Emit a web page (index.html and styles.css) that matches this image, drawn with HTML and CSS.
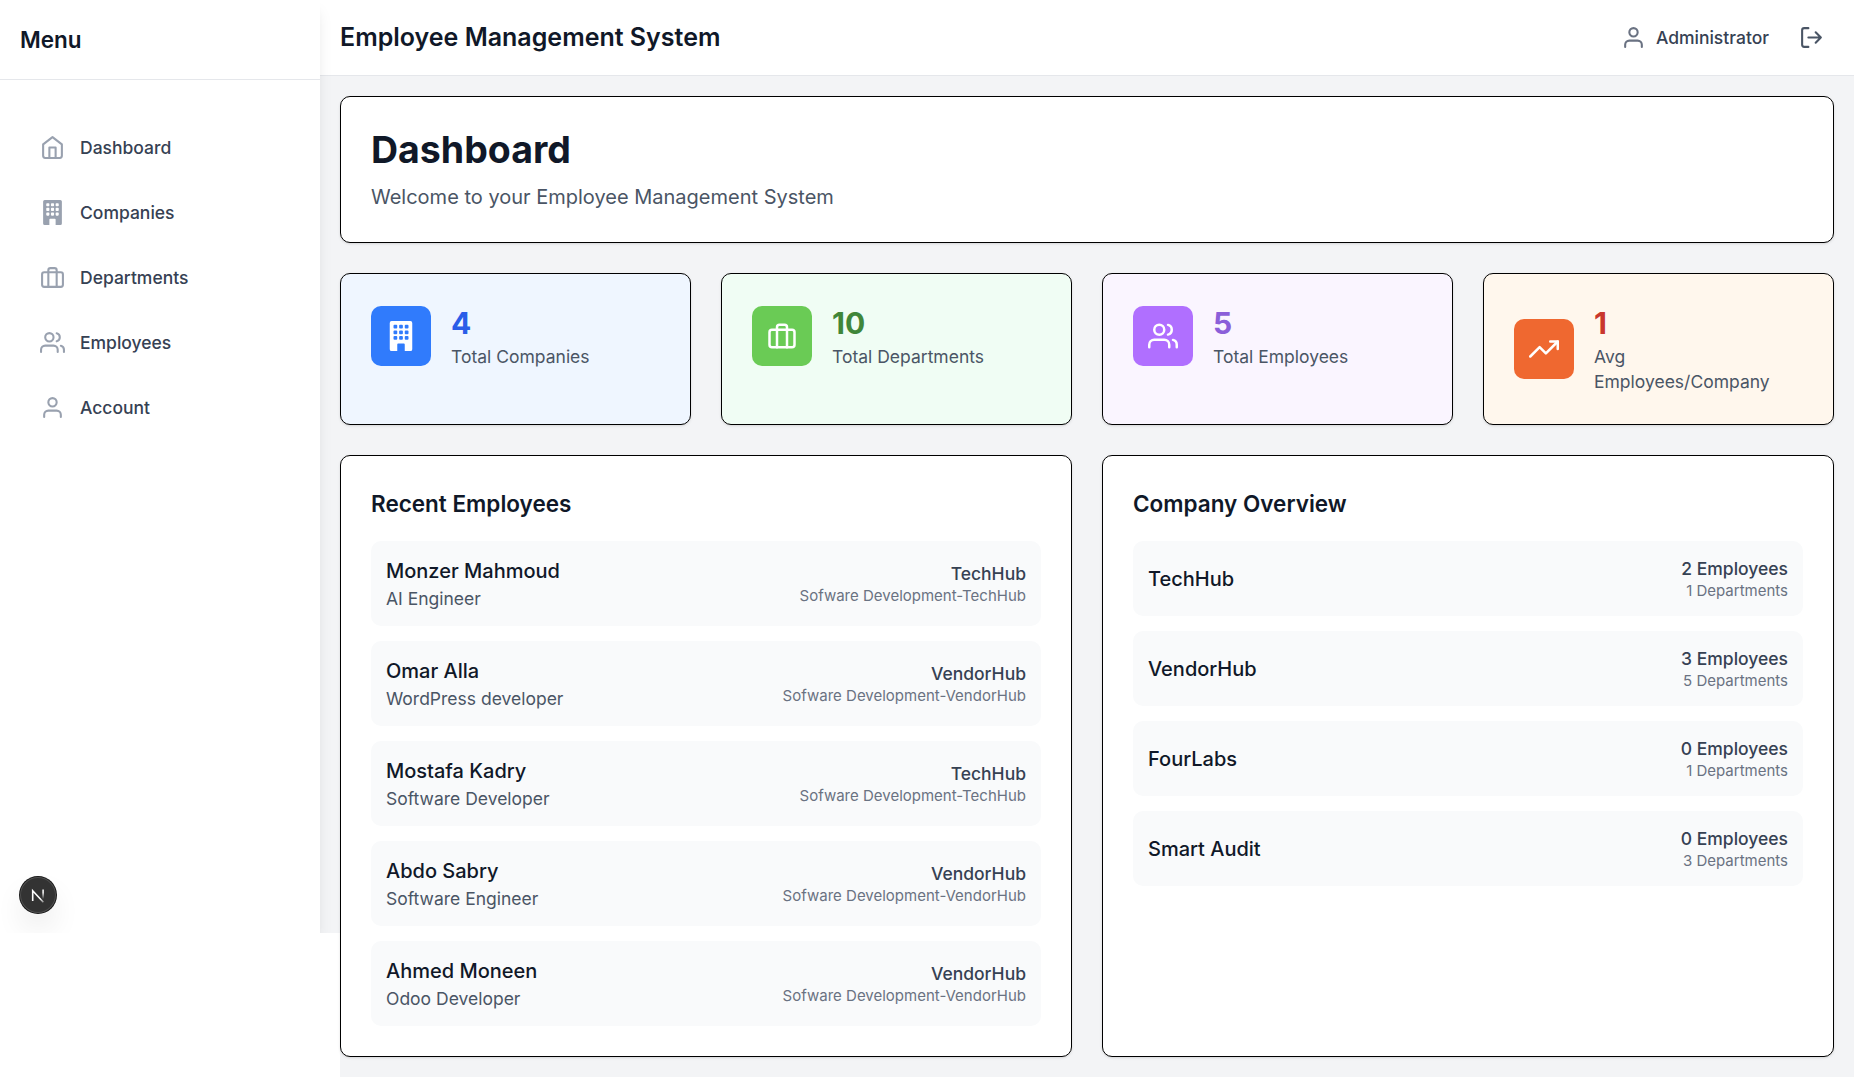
FILE: index.html
```html
<!DOCTYPE html>
<html lang="en">
<head>
<meta charset="utf-8">
<title>Employee Management System</title>
<link rel="stylesheet" href="styles.css">
</head>
<body>
<svg class="sprite" aria-hidden="true">
  <symbol id="home" viewBox="0 0 24 24"><path d="M3 9l9-7 9 7v11a2 2 0 0 1-2 2H5a2 2 0 0 1-2-2z"/><path d="M9 22V12h6v10"/></symbol>
  <symbol id="building" viewBox="0 0 16 16"><path fill="currentColor" stroke="none" fill-rule="evenodd" d="M3 0a1 1 0 0 0-1 1v14a1 1 0 0 0 1 1h3v-3.5a.5.5 0 0 1 .5-.5h3a.5.5 0 0 1 .5.5V16h3a1 1 0 0 0 1-1V1a1 1 0 0 0-1-1zm1 2.5a.5.5 0 0 1 .5-.5h1a.5.5 0 0 1 .5.5v1a.5.5 0 0 1-.5.5h-1a.5.5 0 0 1-.5-.5zm3 0a.5.5 0 0 1 .5-.5h1a.5.5 0 0 1 .5.5v1a.5.5 0 0 1-.5.5h-1a.5.5 0 0 1-.5-.5zm3.500-.5h1a.5.5 0 0 1 .5.5v1a.5.5 0 0 1-.5.5h-1a.5.5 0 0 1-.5-.5v-1a.5.5 0 0 1 .5-.5M4 5.500a.5.5 0 0 1 .5-.5h1a.5.5 0 0 1 .5.5v1a.5.5 0 0 1-.5.5h-1a.5.5 0 0 1-.5-.5zM7.500 5h1a.5.5 0 0 1 .5.5v1a.5.5 0 0 1-.5.5h-1a.5.5 0 0 1-.5-.5v-1a.5.5 0 0 1 .5-.5m2.500.5a.5.5 0 0 1 .5-.5h1a.5.5 0 0 1 .5.5v1a.5.5 0 0 1-.5.5h-1a.5.5 0 0 1-.5-.5zM4.500 8h1a.5.5 0 0 1 .5.5v1a.5.5 0 0 1-.5.5h-1a.5.5 0 0 1-.5-.5v-1a.5.5 0 0 1 .5-.5m2.500.5a.5.5 0 0 1 .5-.5h1a.5.5 0 0 1 .5.5v1a.5.5 0 0 1-.5.5h-1a.5.5 0 0 1-.5-.5zm3.500-.5h1a.5.5 0 0 1 .5.5v1a.5.5 0 0 1-.5.5h-1a.5.5 0 0 1-.5-.5v-1a.5.5 0 0 1 .5-.5"/></symbol>
  <symbol id="briefcase" viewBox="0 0 24 24"><rect x="2" y="7" width="20" height="14" rx="2"/><path d="M16 21V5a2 2 0 0 0-2-2h-4a2 2 0 0 0-2 2v16"/></symbol>
  <symbol id="users" viewBox="0 0 24 24"><path d="M17 21v-2a4 4 0 0 0-4-4H5a4 4 0 0 0-4 4v2"/><circle cx="9" cy="7" r="4"/><path d="M23 21v-2a4 4 0 0 0-3-3.87M16 3.130a4 4 0 0 1 0 7.750"/></symbol>
  <symbol id="user" viewBox="0 0 24 24"><path d="M20 21v-2a4 4 0 0 0-4-4H8a4 4 0 0 0-4 4v2"/><circle cx="12" cy="7" r="4"/></symbol>
  <symbol id="logout" viewBox="0 0 24 24"><path d="M9 21H5a2 2 0 0 1-2-2V5a2 2 0 0 1 2-2h4M16 17l5-5-5-5M21 12H9"/></symbol>
  <symbol id="trend" viewBox="0 0 24 24"><path d="M23 6l-9.500 9.500-5-5L1 18"/><path d="M17 6h6v6"/></symbol>
</svg>
<div class="app">
  <aside class="sidebar">
    <div class="sidebar-head"><h2>Menu</h2></div>
    <nav class="nav">
      <a class="nav-item"><svg class="icon"><use href="#home"/></svg>Dashboard</a>
      <a class="nav-item"><svg class="icon"><use href="#building"/></svg>Companies</a>
      <a class="nav-item"><svg class="icon"><use href="#briefcase"/></svg>Departments</a>
      <a class="nav-item"><svg class="icon"><use href="#users"/></svg>Employees</a>
      <a class="nav-item"><svg class="icon"><use href="#user"/></svg>Account</a>
    </nav>
  </aside>
  <div class="content">
    <header class="topbar">
      <h1>Employee Management System</h1>
      <div class="account">
        <div class="who"><svg class="icon"><use href="#user"/></svg><span>Administrator</span></div>
        <div class="logout"><svg class="icon"><use href="#logout"/></svg></div>
      </div>
    </header>
    <main class="main">
      <section class="card">
        <h2 class="page-title">Dashboard</h2>
        <p class="lead">Welcome to your Employee Management System</p>
      </section>
      <section class="stats">
        <div class="card blue"><div class="stat"><div class="badge"><svg class="icon"><use href="#building"/></svg></div><div><p class="num">4</p><p class="label">Total Companies</p></div></div></div>
        <div class="card green"><div class="stat"><div class="badge"><svg class="icon"><use href="#briefcase"/></svg></div><div><p class="num">10</p><p class="label">Total Departments</p></div></div></div>
        <div class="card purple"><div class="stat"><div class="badge"><svg class="icon"><use href="#users"/></svg></div><div><p class="num">5</p><p class="label">Total Employees</p></div></div></div>
        <div class="card orange"><div class="stat"><div class="badge"><svg class="icon"><use href="#trend"/></svg></div><div><p class="num">1</p><p class="label">Avg Employees/Company</p></div></div></div>
      </section>
      <section class="panels">
        <div class="card">
          <h3>Recent Employees</h3>
          <div class="rows">
            <div class="row"><div><p class="name">Monzer Mahmoud</p><p class="label">AI Engineer</p></div><div class="side"><p class="strong">TechHub</p><p class="small">Sofware Development-TechHub</p></div></div>
            <div class="row"><div><p class="name">Omar Alla</p><p class="label">WordPress developer</p></div><div class="side"><p class="strong">VendorHub</p><p class="small">Sofware Development-VendorHub</p></div></div>
            <div class="row"><div><p class="name">Mostafa Kadry</p><p class="label">Software Developer</p></div><div class="side"><p class="strong">TechHub</p><p class="small">Sofware Development-TechHub</p></div></div>
            <div class="row"><div><p class="name">Abdo Sabry</p><p class="label">Software Engineer</p></div><div class="side"><p class="strong">VendorHub</p><p class="small">Sofware Development-VendorHub</p></div></div>
            <div class="row"><div><p class="name">Ahmed Moneen</p><p class="label">Odoo Developer</p></div><div class="side"><p class="strong">VendorHub</p><p class="small">Sofware Development-VendorHub</p></div></div>
          </div>
        </div>
        <div class="card">
          <h3>Company Overview</h3>
          <div class="rows">
            <div class="row"><p class="name">TechHub</p><div class="side"><p class="strong">2 Employees</p><p class="small">1 Departments</p></div></div>
            <div class="row"><p class="name">VendorHub</p><div class="side"><p class="strong">3 Employees</p><p class="small">5 Departments</p></div></div>
            <div class="row"><p class="name">FourLabs</p><div class="side"><p class="strong">0 Employees</p><p class="small">1 Departments</p></div></div>
            <div class="row"><p class="name">Smart Audit</p><div class="side"><p class="strong">0 Employees</p><p class="small">3 Departments</p></div></div>
          </div>
        </div>
      </section>
    </main>
  </div>
  <div class="dev-layer">
    <div class="dev-badge">
      <svg viewBox="0 0 36 36" fill="none">
        <defs>
          <linearGradient id="fade-a" x1="15" y1="15" x2="24" y2="26" gradientUnits="userSpaceOnUse"><stop offset=".6" stop-color="#fff"/><stop offset="1" stop-color="#fff" stop-opacity=".3"/></linearGradient>
          <linearGradient id="fade-b" x1="23" y1="13" x2="23" y2="22" gradientUnits="userSpaceOnUse"><stop offset=".3" stop-color="#fff"/><stop offset="1" stop-color="#fff" stop-opacity="0"/></linearGradient>
        </defs>
        <path d="M12.700 24V13.700L23.400 25.300" stroke="url(#fade-a)" stroke-width="1.600"/>
        <path d="M23.100 12.500v9.500" stroke="url(#fade-b)" stroke-width="1.500"/>
      </svg>
    </div>
  </div>
</div>
</body>
</html>
```

FILE: styles.css
```css
* { box-sizing: border-box; margin: 0; padding: 0; }
html { font-size: 20px; }
body { background: #fff; color: #101828; font-family: Inter, "Liberation Sans", sans-serif; overflow: hidden; }
.sprite { display: none; }
.icon { width: 25px; height: 25px; flex: none; fill: none; stroke: currentColor; stroke-width: 2; stroke-linecap: round; stroke-linejoin: round; }

.app { position: relative; display: flex; align-items: flex-start; height: 1077px; background: linear-gradient(#f3f4f6, #f3f4f6) 0 0 / 100% 933px no-repeat; }
.sidebar { position: relative; z-index: 2; width: 320px; height: 933px; flex: none; background: #fff; box-shadow: 0 10px 15px -3px rgba(0,0,0,.1), 0 4px 6px -4px rgba(0,0,0,.1); clip-path: inset(0 -20px 0 0); }
.sidebar-head { display: flex; align-items: center; height: 80px; padding: 0 20px; border-bottom: 1px solid #e5e7eb; }
.sidebar-head h2 { font-size: 22.5px; line-height: 35px; font-weight: 600; }
.nav { display: flex; flex-direction: column; gap: 10px; margin-top: 40px; padding: 0 20px; }
.nav-item { display: flex; align-items: center; gap: 15px; height: 55px; padding: 0 20px; font-size: 17.5px; line-height: 25px; font-weight: 500; color: #364153; }
.nav-item .icon { color: #99a1af; }

.content { flex: 1; min-width: 0; }
.topbar { display: flex; justify-content: space-between; align-items: center; height: 76px; padding: 0 20px; background: #fff; border-bottom: 1px solid #e5e7eb; }
.topbar h1 { font-size: 25px; line-height: 35px; font-weight: 600; }
.account { display: flex; align-items: center; gap: 20px; }
.who { display: flex; align-items: center; gap: 10px; font-size: 17.5px; line-height: 25px; font-weight: 500; color: #364153; }
.who .icon { color: #6a7282; }
.logout { display: flex; padding: 10px; color: #4a5565; }

.main { display: flex; flex-direction: column; gap: 30px; padding: 20px; background: linear-gradient(#f3f4f6, #f3f4f6) 20px 0 / 100% 100% no-repeat; }
.card { min-width: 0; padding: 30px; background: #fff; border: 1px solid #000; border-radius: 10px; box-shadow: 0 1px 3px rgba(0,0,0,.1), 0 1px 2px -1px rgba(0,0,0,.1); }
.page-title { margin-bottom: 10px; font-size: 37.5px; line-height: 45px; font-weight: 700; }
.lead { font-size: 20px; line-height: 30px; color: #4a5565; }

.stats { display: grid; grid-template-columns: repeat(4, 1fr); gap: 30px; }
.stat { display: flex; align-items: center; gap: 20px; }
.badge { display: grid; place-items: center; flex: none; width: 60px; height: 60px; margin-bottom: 1px; border-radius: 10px; color: #fff; }
.badge .icon { width: 30px; height: 30px; }
.num { padding-bottom: 2px; font-size: 30px; line-height: 38px; font-weight: 700; }
.label { font-size: 17.5px; line-height: 25px; color: #4a5565; }
.blue { background: #eff6ff; }
.blue .badge { background: #307bfc; }
.blue .num { color: #2a5de8; }
.green { background: #f0fdf4; }
.green .badge { background: #6acb55; }
.green .num { color: #408639; }
.purple { background: #faf5ff; }
.purple .badge { background: #b06fff; }
.purple .num { color: #8b5fd9; }
.orange { background: #fff7ed; }
.orange .badge { background: #ef6830; }
.orange .num { color: #c9372c; }

.panels { display: grid; grid-template-columns: repeat(2, 1fr); gap: 30px; }
.panels h3 { margin-bottom: 20px; font-size: 22.5px; line-height: 35px; font-weight: 600; }
.rows { display: flex; flex-direction: column; gap: 15px; }
.row { display: flex; justify-content: space-between; align-items: center; padding: 15px; border-radius: 10px; background: #f9fafb; }
.name { font-size: 20px; line-height: 30px; font-weight: 500; }
.side { text-align: right; }
.strong { font-size: 17.5px; line-height: 25px; font-weight: 500; color: #364153; }
.small { font-size: 15px; line-height: 20px; color: #6a7282; }

/* Framework dev indicator floating over the page corner. */
.dev-layer { position: absolute; z-index: 3; left: 0; top: 0; width: 320px; height: 933px; overflow: hidden; pointer-events: none; }
.dev-badge { position: absolute; left: 20px; bottom: 20px; width: 36px; height: 36px; border-radius: 50%; background: #333; box-shadow: 0 0 0 1px #171717, inset 0 0 0 1px rgba(255,255,255,.14), 0 16px 32px -8px rgba(0,0,0,.24); }
.dev-badge svg { display: block; width: 36px; height: 36px; }
```
